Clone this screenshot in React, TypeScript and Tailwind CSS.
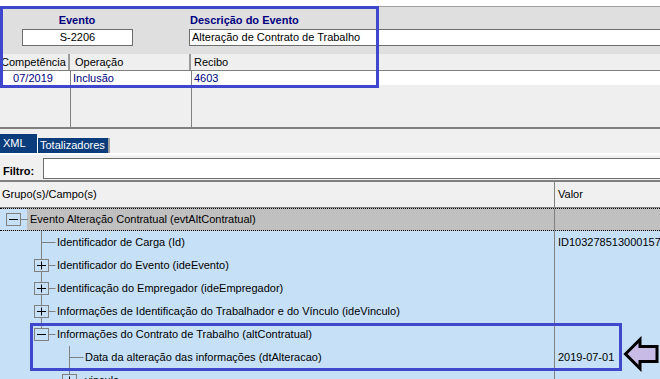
import React from 'react';

const BOX = '#808080';
const BLUE_BG = '#c6e0f8';

type TreeRow = {
  label: string;
  value?: string;
  kind: 'leaf1' | 'plus1' | 'minus1last' | 'leaf2' | 'plus2last';
};

const rows: TreeRow[] = [
  { label: 'Identificador de Carga (Id)', value: 'ID1032785130001572019071710000000001', kind: 'leaf1' },
  { label: 'Identificador do Evento (ideEvento)', kind: 'plus1' },
  { label: 'Identificação do Empregador (ideEmpregador)', kind: 'plus1' },
  { label: 'Informações de Identificação do Trabalhador e do Vínculo (ideVinculo)', kind: 'plus1' },
  { label: 'Informações do Contrato de Trabalho (altContratual)', kind: 'minus1last' },
  { label: 'Data da alteração das informações (dtAlteracao)', value: '2019-07-01', kind: 'leaf2' },
  { label: 'vinculo', kind: 'plus2last' },
];

function ExpandBox({ cx, sign }: { cx: number; sign: '+' | '-' }) {
  return (
    <g>
      <rect x={cx - 7} y={5.5} width={14} height={12} fill={BLUE_BG} stroke={BOX} />
      <line x1={cx - 4.5} y1={11.5} x2={cx + 4.5} y2={11.5} stroke="#000" />
      {sign === '+' && <line x1={cx} y1={7.5} x2={cx} y2={15.5} stroke="#000" />}
    </g>
  );
}

function Connector({ kind }: { kind: TreeRow['kind'] }) {
  const level2 = kind === 'leaf2' || kind === 'plus2last';
  const cx = level2 ? 69.5 : 41.5;
  const hasBox = kind === 'plus1' || kind === 'minus1last' || kind === 'plus2last';
  const last = kind === 'minus1last' || kind === 'plus2last';
  return (
    <svg width={level2 ? 84 : 56} height={23} className="shrink-0">
      {hasBox ? (
        <>
          <line x1={cx} y1={0} x2={cx} y2={5.5} stroke={BOX} />
          {!last && <line x1={cx} y1={17.5} x2={cx} y2={23} stroke={BOX} />}
          <line x1={cx + 7} y1={11.5} x2={cx + 14} y2={11.5} stroke={BOX} />
          <ExpandBox cx={cx} sign={kind === 'minus1last' ? '-' : '+'} />
        </>
      ) : (
        <>
          <line x1={cx} y1={0} x2={cx} y2={23} stroke={BOX} />
          <line x1={cx} y1={11.5} x2={cx + 14} y2={11.5} stroke={BOX} />
        </>
      )}
    </svg>
  );
}

export default function App() {
  return (
    <div className="relative w-[660px] h-[379px] overflow-hidden bg-white text-[11px] text-black font-['Liberation_Sans',Arial,sans-serif]">
      {/* Event header */}
      <div className="h-[6px] bg-white" />
      <div className="flex h-[48px] border-t border-[#a0a0a0] bg-[#dfdfdf]">
        <div className="w-[189px] shrink-0 pl-[22px]">
          <div className="flex h-[22px] w-[110px] items-end justify-center pb-[1px] font-bold text-[#000080]">Evento</div>
          <div className="flex h-[17px] w-[111px] items-center justify-center border border-[#6d6d6d] bg-white">S-2206</div>
        </div>
        <div className="flex-1">
          <div className="flex h-[22px] items-end pb-[1px] pl-[1px] font-bold text-[#000080]">Descrição do Evento</div>
          <div className="flex h-[17px] items-center border-y border-l border-[#6d6d6d] bg-white pl-[2px]">
            Alteração de Contrato de Trabalho
          </div>
        </div>
      </div>

      {/* Competência grid */}
      <div className="flex h-[17px] border-b border-[#808080] bg-[#efefef]">
        <div className="flex w-[70px] items-center border-r-2 border-[#9a9a9a] pl-[1px]">Competência</div>
        <div className="flex w-[121px] items-center border-r-2 border-[#9a9a9a] pl-[5px]">Operação</div>
        <div className="flex flex-1 items-center pl-[3px]">Recibo</div>
      </div>
      <div className="flex h-[14px] bg-white text-[#000080]">
        <div className="flex w-[70px] items-center justify-center pr-[4px]">07/2019</div>
        <div className="flex w-[121px] items-center border-l border-[#808080] pl-[2px]">Inclusão</div>
        <div className="flex flex-1 items-center border-l border-[#808080] pl-[2px]">4603</div>
      </div>
      <div className="flex h-[44px] border-b-2 border-[#808080] bg-[#efefef]">
        <div className="w-[70px]" />
        <div className="w-[121px] border-l border-[#808080]" />
        <div className="flex-1 border-l border-[#808080]" />
      </div>

      {/* Tabs */}
      <div className="flex h-[24px] items-end bg-[#f0f0f0]">
        <div className="h-[19px] w-[37px] bg-[#0b3d7d] pl-[3px] pt-[1px] text-white">XML</div>
        <div className="flex h-[15px] w-[73px] items-center border-r-2 border-l border-r-[#a0a0a0] border-l-white bg-[#0b3d7d] pl-[2px] text-white">
          Totalizadores
        </div>
      </div>
      <div className="h-[2px] bg-white" />

      {/* Filter */}
      <div className="flex h-[27px] items-start border-b-2 border-[#808080] bg-[#f0f0f0]">
        <div className="mt-[10px] w-[43px] pl-[3px] font-bold leading-[12px]">Filtro:</div>
        <div className="mt-[3px] h-[21px] flex-1 border-y border-l border-[#6d6d6d] bg-white" />
      </div>

      {/* Tree header */}
      <div className="flex h-[26px] border-b border-[#808080] bg-[#f0f0f0]">
        <div className="flex w-[554px] items-center pl-[2px]">Grupo(s)/Campo(s)</div>
        <div className="flex flex-1 items-center border-l border-[#808080] pl-[3px]">Valor</div>
      </div>

      {/* Tree */}
      <div className="bg-[#c6e0f8]">
        <div className="flex h-[23px] border-y border-dotted border-black bg-[#c0c0c0]">
          <div className="flex w-[554px] items-center">
            <svg width={28} height={21} className="shrink-0">
              <rect x={0} y={0} width={27} height={21} fill={BLUE_BG} />
              <rect x={6.5} y={4.5} width={14} height={12} fill={BLUE_BG} stroke={BOX} />
              <line x1={9} y1={10.5} x2={18} y2={10.5} stroke="#000" />
              <line x1={20.5} y1={10.5} x2={28} y2={10.5} stroke={BOX} />
            </svg>
            <span className="pl-[2px]">Evento Alteração Contratual (evtAltContratual)</span>
          </div>
          <div className="flex-1 border-l border-[#808080]" />
        </div>
        {rows.map((r) => (
          <div key={r.label} className="flex h-[23px]">
            <div className="flex w-[554px] items-center whitespace-nowrap">
              <Connector kind={r.kind} />
              <span className="pl-px">{r.label}</span>
            </div>
            <div className="flex flex-1 items-center overflow-hidden whitespace-nowrap border-l border-[#808080] pl-[3px]">
              {r.value}
            </div>
          </div>
        ))}
      </div>

      {/* Highlights */}
      <div className="absolute left-0 top-[6px] h-[82px] w-[379px] border-[3px] border-[#3f48cc]" />
      <div className="absolute left-[30px] top-[323px] h-[48px] w-[592px] border-[3px] border-[#3f48cc]" />
      <svg className="absolute left-[622px] top-[336px]" width={38} height={36}>
        <path
          d="M3.5 18 L18 3.5 L18 10.5 L35 10.5 L35 25.5 L18 25.5 L18 32.5 Z"
          fill="#c8bce6"
          stroke="#000"
          strokeWidth={3}
          strokeLinejoin="miter"
        />
      </svg>
    </div>
  );
}
